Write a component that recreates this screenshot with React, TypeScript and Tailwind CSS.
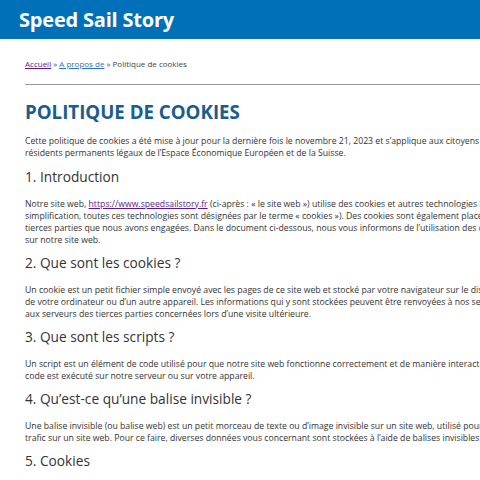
export default function App() {
  const font = { fontFamily: '"Open Sans", "Noto Sans", Arial, sans-serif' };
  return (
    <div className="w-[480px] h-[480px] overflow-hidden bg-white text-[#333]" style={font}>
      <header className="h-[39px] bg-[#0070b8] flex items-center pl-[19px]">
        <h1 className="text-[20px] font-bold text-white leading-none tracking-[-0.2px]">Speed Sail Story</h1>
      </header>

      <main className="pl-[25px] w-[600px]">
        <nav className="pt-[19px] text-[8px] leading-[12px] text-[#444]">
          <a className="text-[#5b1b8f] underline">Accueil</a>
          <span> » </span>
          <a className="text-[#2d6fcf] underline">A propos de</a>
          <span> » Politique de cookies</span>
        </nav>
        <hr className="mt-[14px] border-0 border-t border-[#9a9a9a]" />

        <h1 className="mt-[15px] text-[18.7px] leading-[24px] font-bold text-[#1b5c8e]">POLITIQUE DE COOKIES</h1>

        <div className="text-[8.7px] leading-[12px] whitespace-nowrap">
          <p className="mt-[11px]">
            Cette politique de cookies a été mise à jour pour la dernière fois le novembre 21, 2023 et s’applique aux citoyens et aux
            <br />
            résidents permanents légaux de l’Espace Économique Européen et de la Suisse.
          </p>

          <h2 className="mt-[8px] mb-[10.5px] text-[13.7px] leading-[20px]">1. Introduction</h2>
          <p>
            Notre site web, <a className="text-[#5b1b8f] underline">https://www.speedsailstory.fr</a> (ci-après : « le site web ») utilise des cookies et autres technologies liées (par
            <br />
            simplification, toutes ces technologies sont désignées par le terme « cookies »). Des cookies sont également placés par des
            <br />
            tierces parties que nous avons engagées. Dans le document ci-dessous, nous vous informons de l’utilisation des cookies
            <br />
            sur notre site web.
          </p>

          <h2 className="mt-[7.5px] mb-[10.5px] text-[13.7px] leading-[20px]">2. Que sont les cookies ?</h2>
          <p>
            Un cookie est un petit fichier simple envoyé avec les pages de ce site web et stocké par votre navigateur sur le disque dur
            <br />
            de votre ordinateur ou d’un autre appareil. Les informations qui y sont stockées peuvent être renvoyées à nos serveurs ou
            <br />
            aux serveurs des tierces parties concernées lors d’une visite ultérieure.
          </p>

          <h2 className="mt-[7.5px] mb-[10.5px] text-[13.7px] leading-[20px]">3. Que sont les scripts ?</h2>
          <p>
            Un script est un élément de code utilisé pour que notre site web fonctionne correctement et de manière interactive. Ce
            <br />
            code est exécuté sur notre serveur ou sur votre appareil.
          </p>

          <h2 className="mt-[7.5px] mb-[10.5px] text-[13.7px] leading-[20px]">4. Qu’est-ce qu’une balise invisible ?</h2>
          <p>
            Une balise invisible (ou balise web) est un petit morceau de texte ou d’image invisible sur un site web, utilisé pour suivre le
            <br />
            trafic sur un site web. Pour ce faire, diverses données vous concernant sont stockées à l’aide de balises invisibles.
          </p>

          <h2 className="mt-[7.5px] mb-[10.5px] text-[13.7px] leading-[20px]">5. Cookies</h2>
        </div>
      </main>
    </div>
  );
}
